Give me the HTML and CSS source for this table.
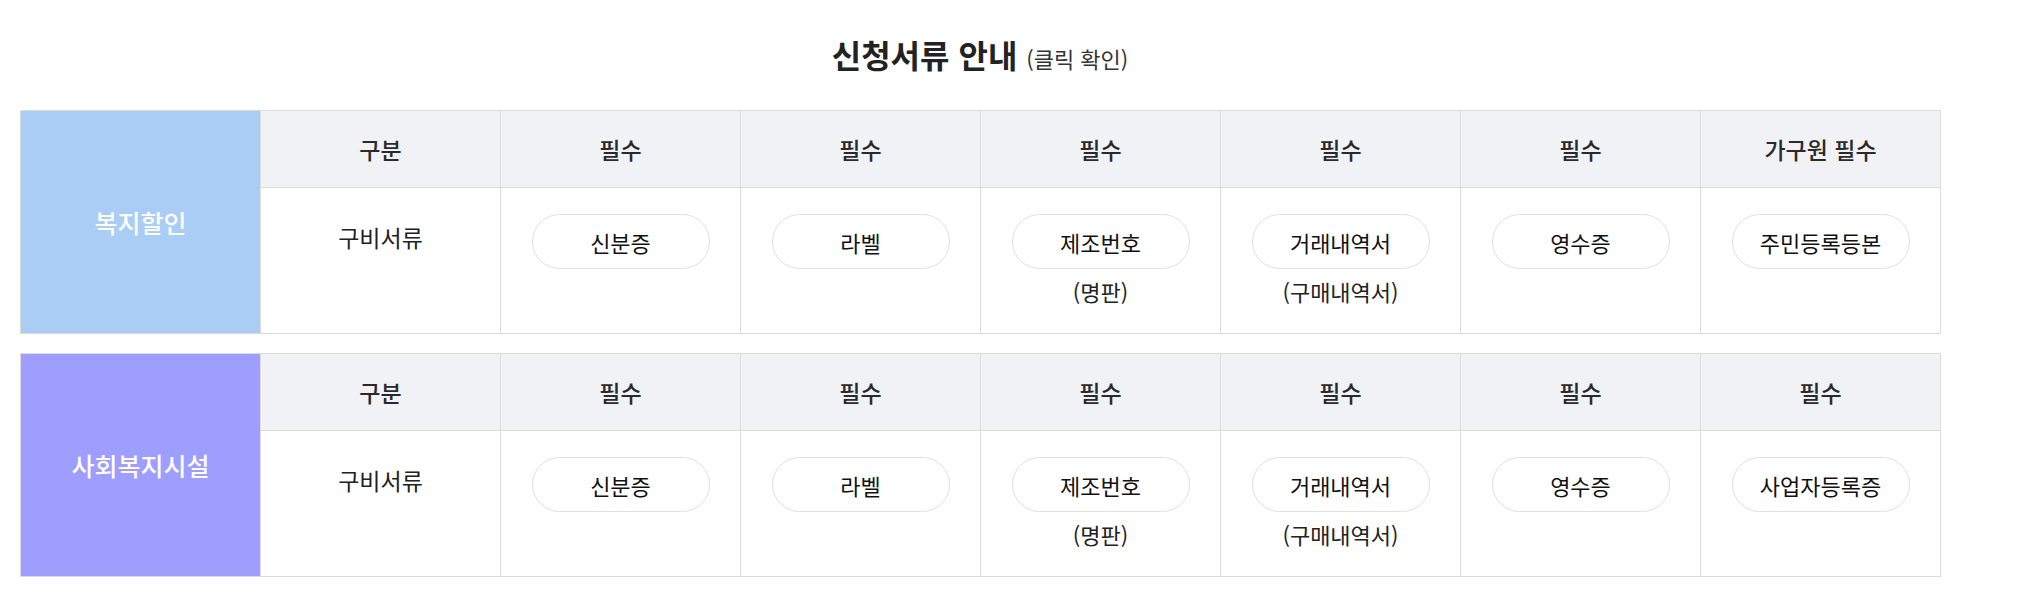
FILE: index.html
```html
<!DOCTYPE html>
<html lang="ko">
<head>
<meta charset="utf-8">
<title>신청서류 안내</title>
<link rel="stylesheet" href="styles.css">
</head>
<body>
<div class="wrap">
  <h2 class="title">신청서류 안내 <span class="sub">(클릭 확인)</span></h2>

  <table class="doc">
    <colgroup><col span="8" class="c"></colgroup>
    <tr class="head">
      <th class="label blue" rowspan="2">복지할인</th>
      <th>구분</th><th>필수</th><th>필수</th><th>필수</th><th>필수</th><th>필수</th><th>가구원 필수</th>
    </tr>
    <tr class="body">
      <td><div class="plain">구비서류</div></td>
      <td><div class="pill">신분증</div></td>
      <td><div class="pill">라벨</div></td>
      <td><div class="pill">제조번호</div><div class="note">(명판)</div></td>
      <td><div class="pill">거래내역서</div><div class="note">(구매내역서)</div></td>
      <td><div class="pill">영수증</div></td>
      <td><div class="pill">주민등록등본</div></td>
    </tr>
  </table>

  <table class="doc">
    <colgroup><col span="8" class="c"></colgroup>
    <tr class="head">
      <th class="label purple" rowspan="2">사회복지시설</th>
      <th>구분</th><th>필수</th><th>필수</th><th>필수</th><th>필수</th><th>필수</th><th>필수</th>
    </tr>
    <tr class="body">
      <td><div class="plain">구비서류</div></td>
      <td><div class="pill">신분증</div></td>
      <td><div class="pill">라벨</div></td>
      <td><div class="pill">제조번호</div><div class="note">(명판)</div></td>
      <td><div class="pill">거래내역서</div><div class="note">(구매내역서)</div></td>
      <td><div class="pill">영수증</div></td>
      <td><div class="pill">사업자등록증</div></td>
    </tr>
  </table>
</div>
</body>
</html>
```

FILE: styles.css
```css
* { box-sizing: border-box; }
html, body { margin: 0; padding: 0; background: #fff; }
body {
  font-family: "Noto Sans CJK KR", "Noto Sans", sans-serif;
  color: #222;
}
.wrap {
  width: 1920px;
  margin-left: 20px;
}
.title {
  margin: 0;
  height: 110px;
  padding-top: 31px;
  text-align: center;
  font-size: 32px;
  line-height: 46px;
  font-weight: 700;
  color: #222;
}
.title .sub {
  font-size: 22px;
  font-weight: 400;
  color: #333;
}
.doc {
  width: 1920px;
  table-layout: fixed;
  border-collapse: collapse;
  border: 1px solid #dcdcdc;
  margin-bottom: 19px;
}
.doc col.c { width: 240px; }
.doc th, .doc td {
  border: 1px solid #dcdcdc;
  text-align: center;
  padding: 0;
}
.head th {
  height: 77px;
  background: #f1f2f6;
  font-size: 23px;
  font-weight: 500;
  color: #2a2a2a;
}
.head th.label {
  color: #fff;
  font-size: 25px;
  font-weight: 500;
}
.label.blue { background: #aacdf5; }
.label.purple { background: #9d9eff; }
.body td {
  height: 146px;
  vertical-align: top;
  padding: 26px 30px 0;
}
.plain {
  font-size: 23px;
  line-height: 46px;
  color: #222;
}
.pill {
  width: 178px;
  height: 55px;
  margin: 0 auto;
  border: 1px solid #e0e0e0;
  border-radius: 28px;
  display: flex;
  align-items: center;
  justify-content: center;
  font-size: 22px;
  color: #111;
  background: #fff;
}
.note {
  margin-top: 6px;
  font-size: 22px;
  line-height: 32px;
  color: #222;
}
```
